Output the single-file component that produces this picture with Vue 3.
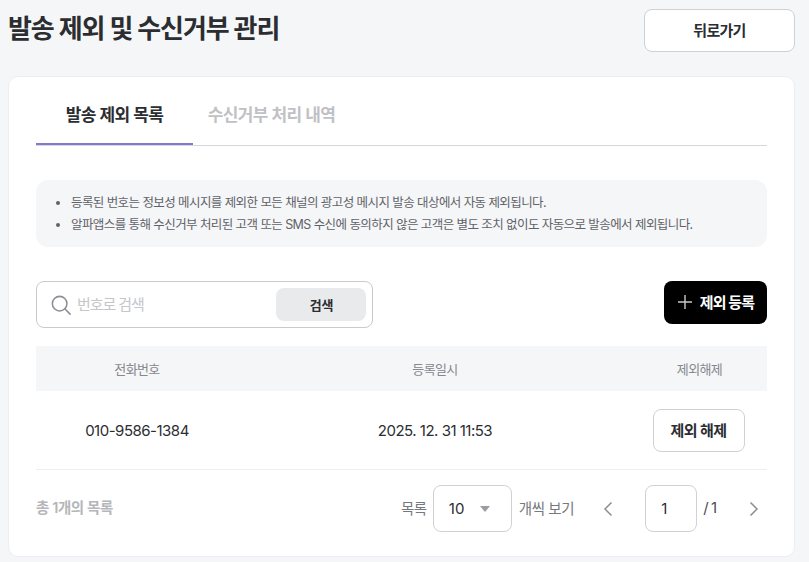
<template>
  <div class="page">
    <header class="page-head">
      <h1 class="title">발송 제외 및 수신거부 관리</h1>
      <button type="button" class="btn-back">뒤로가기</button>
    </header>

    <section class="card">
      <nav class="tabs">
        <button
          v-for="(tab, i) in tabs"
          :key="tab"
          type="button"
          class="tab"
          :class="{ active: i === 0 }"
        >
          {{ tab }}
        </button>
      </nav>

      <ul class="notice">
        <li v-for="line in notices" :key="line">{{ line }}</li>
      </ul>

      <div class="toolbar">
        <div class="search">
          <svg class="search-icon" width="20" height="20" viewBox="0 0 22 22" fill="none">
            <circle cx="9.5" cy="9.5" r="8" stroke="#8b8e94" stroke-width="1.7" />
            <path d="M15.2 15.2L21 21" stroke="#8b8e94" stroke-width="1.7" stroke-linecap="round" />
          </svg>
          <span class="placeholder">번호로 검색</span>
          <button type="button" class="btn-search">검색</button>
        </div>
        <button type="button" class="btn-add">
          <svg width="16" height="16" viewBox="0 0 16 16" fill="none">
            <path d="M8 1V15M1 8H15" stroke="#c9c9c9" stroke-width="1.4" />
          </svg>
          <span>제외 등록</span>
        </button>
      </div>

      <div class="table">
        <div class="row head">
          <div class="cell">전화번호</div>
          <div class="cell">등록일시</div>
          <div class="cell">제외해제</div>
        </div>
        <div v-for="row in rows" :key="row.phone" class="row body">
          <div class="cell">{{ row.phone }}</div>
          <div class="cell">{{ row.date }}</div>
          <div class="cell">
            <button type="button" class="btn-release">제외 해제</button>
          </div>
        </div>
      </div>

      <footer class="foot">
        <span class="total">총 1개의 목록</span>
        <div class="paging">
          <span class="label">목록</span>
          <div class="select">
            <span>10</span>
            <svg width="10" height="6" viewBox="0 0 10 6"><path d="M0 0H10L5 6Z" fill="#9a9da2" /></svg>
          </div>
          <span class="label after">개씩 보기</span>
          <button type="button" class="arrow prev" aria-label="이전">
            <svg width="10" height="16" viewBox="0 0 10 16" fill="none">
              <path d="M8.5 1.5L2 8L8.5 14.5" stroke="#8b8e94" stroke-width="1.5" />
            </svg>
          </button>
          <div class="page-input">1</div>
          <span class="page-total">/ 1</span>
          <button type="button" class="arrow next" aria-label="다음">
            <svg width="10" height="16" viewBox="0 0 10 16" fill="none">
              <path d="M1.5 1.5L8 8L1.5 14.5" stroke="#8b8e94" stroke-width="1.5" />
            </svg>
          </button>
        </div>
      </footer>
    </section>
  </div>
</template>

<script setup>
const tabs = ['발송 제외 목록', '수신거부 처리 내역']

const notices = [
  '등록된 번호는 정보성 메시지를 제외한 모든 채널의 광고성 메시지 발송 대상에서 자동 제외됩니다.',
  '알파앱스를 통해 수신거부 처리된 고객 또는 SMS 수신에 동의하지 않은 고객은 별도 조치 없이도 자동으로 발송에서 제외됩니다.'
]

const rows = [{ phone: '010-9586-1384', date: '2025. 12. 31 11:53' }]
</script>

<style>
html,
body {
  margin: 0;
  background: #f5f6f8;
}
</style>

<style scoped>
.page {
  width: 809px;
  height: 562px;
  box-sizing: border-box;
  padding: 9px 14px 0 8px;
  overflow: hidden;
  font-family: Inter, "Noto Sans CJK KR", sans-serif;
  color: #2b2d31;
}

button {
  font-family: inherit;
  cursor: pointer;
}

.page-head {
  display: flex;
  justify-content: space-between;
  align-items: flex-start;
  height: 67px;
}

.title {
  margin: 0;
  font-size: 26px;
  line-height: 40px;
  font-weight: 700;
  letter-spacing: -1.1px;
}

.btn-back {
  width: 151px;
  height: 43px;
  padding: 0 0 2px;
  background: #fff;
  border: 1px solid #cfd1d6;
  border-radius: 8px;
  font-size: 15px;
  font-weight: 600;
  letter-spacing: -0.7px;
  color: #2b2d31;
}

.card {
  box-sizing: border-box;
  height: 481px;
  padding: 0 27px;
  background: #fff;
  border: 1px solid #eceef1;
  border-radius: 10px;
}

.tabs {
  display: flex;
  height: 68px;
  border-bottom: 1px solid #d5d7db;
}

.tab {
  width: 157px;
  height: 68px;
  padding: 6px 0 0;
  background: none;
  border: 0;
  border-bottom: 2px solid transparent;
  font-size: 17px;
  font-weight: 600;
  letter-spacing: -0.6px;
  color: #bfc1c5;
}

.tab.active {
  color: #2b2d31;
  border-bottom-color: #8a75d1;
}

.notice {
  margin: 34px 0 0;
  padding: 12px 0 11px 35px;
  background: #f5f6f8;
  border-radius: 12px;
  font-size: 12.5px;
  line-height: 22px;
  letter-spacing: -0.58px;
  color: #5f6268;
}

.toolbar {
  display: flex;
  justify-content: space-between;
  align-items: flex-start;
  margin-top: 34px;
}

.search {
  box-sizing: border-box;
  display: flex;
  align-items: center;
  width: 337px;
  height: 47px;
  padding: 0 6px 0 14px;
  border: 1px solid #c8cace;
  border-radius: 8px;
}

.search-icon {
  flex: none;
}

.placeholder {
  flex: 1;
  margin-left: 6px;
  padding-bottom: 2px;
  font-size: 15px;
  letter-spacing: -1.1px;
  color: #c4c6ca;
}

.btn-search {
  width: 90px;
  height: 33px;
  padding: 0 0 1px 1px;
  background: #e9eaec;
  border: 0;
  border-radius: 8px;
  font-size: 13px;
  font-weight: 600;
  letter-spacing: -0.2px;
  color: #2b2d31;
}

.btn-add {
  display: flex;
  align-items: center;
  justify-content: center;
  gap: 7px;
  width: 103px;
  height: 43px;
  padding: 0 0 2px;
  background: #000;
  border: 0;
  border-radius: 8px;
  font-size: 15px;
  font-weight: 700;
  letter-spacing: -0.9px;
  color: #fff;
}

.table {
  margin-top: 18px;
}

.row {
  display: grid;
  grid-template-columns: 202px 1fr 135px;
  align-items: center;
  text-align: center;
}

.head {
  height: 45px;
  background: #f5f6f8;
  font-size: 13px;
  letter-spacing: -0.6px;
  color: #85888e;
}

.body {
  height: 78px;
  border-bottom: 1px solid #eceef1;
  font-size: 15px;
  letter-spacing: -0.5px;
  color: #2b2d31;
}

.btn-release {
  width: 92px;
  height: 43px;
  margin-right: 2px;
  padding: 0 0 2px;
  background: #fff;
  border: 1px solid #cfd1d6;
  border-radius: 8px;
  font-size: 15px;
  font-weight: 600;
  letter-spacing: -0.6px;
  color: #2b2d31;
}

.foot {
  display: flex;
  justify-content: space-between;
  align-items: center;
  margin-top: 15px;
}

.total {
  padding-bottom: 4px;
  font-size: 14.5px;
  font-weight: 600;
  letter-spacing: -0.4px;
  color: #b4b6ba;
}

.paging {
  display: flex;
  align-items: center;
}

.label {
  padding-bottom: 2px;
  font-size: 14.5px;
  letter-spacing: -0.4px;
  color: #75787e;
}

.label.after {
  margin-left: 7px;
}

.select {
  box-sizing: border-box;
  display: flex;
  align-items: center;
  justify-content: space-between;
  width: 79px;
  height: 47px;
  margin-left: 6px;
  padding: 0 21px 0 15px;
  border: 1px solid #cfd1d6;
  border-radius: 8px;
  font-size: 15px;
  color: #2b2d31;
}

.arrow {
  display: flex;
  padding: 0;
  background: none;
  border: 0;
}

.prev {
  margin-left: 29px;
}

.page-input {
  box-sizing: border-box;
  width: 52px;
  height: 47px;
  margin-left: 32px;
  padding-left: 15px;
  border: 1px solid #cfd1d6;
  border-radius: 8px;
  font-size: 15px;
  line-height: 45px;
  color: #2b2d31;
}

.page-total {
  margin-left: 6px;
  padding-bottom: 2px;
  font-size: 15px;
  letter-spacing: -1px;
  color: #4b4e54;
}

.next {
  margin-left: 33px;
  margin-right: 8px;
}
</style>
